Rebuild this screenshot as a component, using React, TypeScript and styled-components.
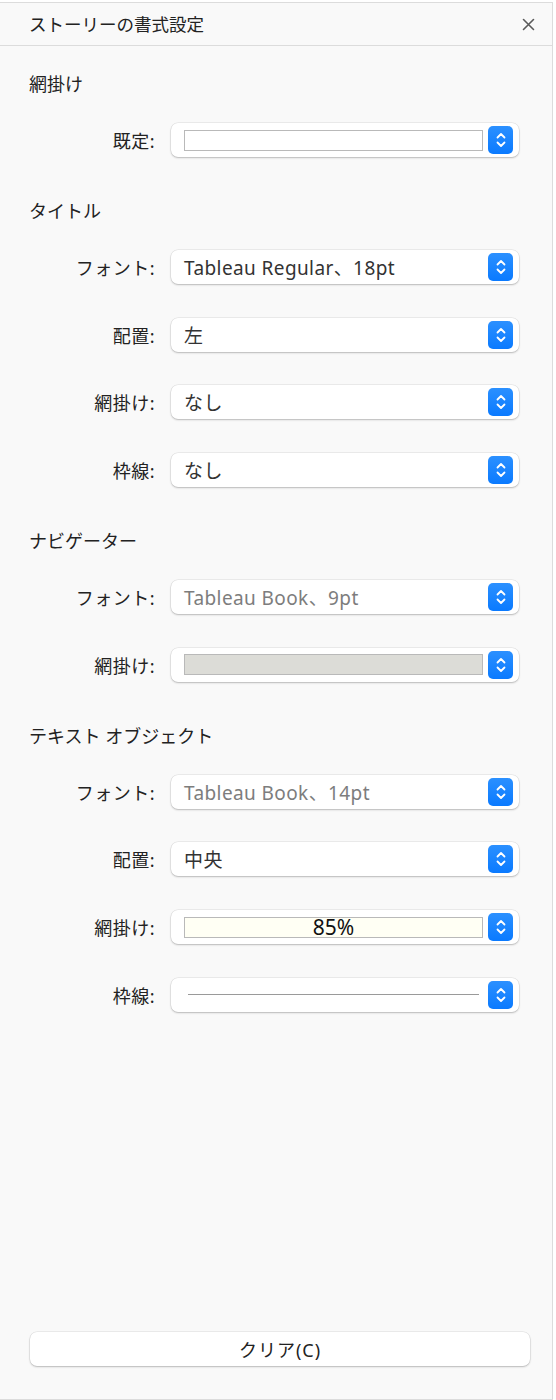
import React from 'react';
import styled, { createGlobalStyle } from 'styled-components';

const GlobalStyle = createGlobalStyle`
  html, body {
    margin: 0;
    padding: 0;
    background: #ffffff;
  }
  body {
    font-family: "Noto Sans", "Noto Sans CJK JP", sans-serif;
    -webkit-font-smoothing: antialiased;
  }
  #root {
    padding-top: 2px;
  }
`;

type RowData = {
  label: string;
  kind: 'text' | 'swatch' | 'line';
  value?: string;
  muted?: boolean;
  swatch?: string;
};

type SectionData = { title: string; rows: RowData[] };

const sections: SectionData[] = [
  {
    title: '網掛け',
    rows: [{ label: '既定:', kind: 'swatch', swatch: '#ffffff' }],
  },
  {
    title: 'タイトル',
    rows: [
      { label: 'フォント:', kind: 'text', value: 'Tableau Regular、18pt' },
      { label: '配置:', kind: 'text', value: '左' },
      { label: '網掛け:', kind: 'text', value: 'なし' },
      { label: '枠線:', kind: 'text', value: 'なし' },
    ],
  },
  {
    title: 'ナビゲーター',
    rows: [
      { label: 'フォント:', kind: 'text', value: 'Tableau Book、9pt', muted: true },
      { label: '網掛け:', kind: 'swatch', swatch: '#dcdcd7' },
    ],
  },
  {
    title: 'テキスト オブジェクト',
    rows: [
      { label: 'フォント:', kind: 'text', value: 'Tableau Book、14pt', muted: true },
      { label: '配置:', kind: 'text', value: '中央' },
      { label: '網掛け:', kind: 'swatch', swatch: '#fffff4', value: '85%' },
      { label: '枠線:', kind: 'line' },
    ],
  },
];

export default function App() {
  return (
    <>
      <GlobalStyle />
      <Panel>
        <Header>
          <Title>ストーリーの書式設定</Title>
          <CloseButton aria-label="閉じる">
            <svg width="13" height="13" viewBox="0 0 13 13">
              <path d="M1.5 1.5 L11.5 11.5 M11.5 1.5 L1.5 11.5" stroke="#5a5a5a" strokeWidth="1.6" strokeLinecap="round" />
            </svg>
          </CloseButton>
        </Header>
        <Body>
          {sections.map((s) => (
            <Section key={s.title}>
              <SectionTitle>{s.title}</SectionTitle>
              <Rows>
                {s.rows.map((r, i) => (
                  <Row key={i}>
                    <Label>{r.label}</Label>
                    <Select>
                      <Value>
                        {r.kind === 'text' && <ValueText $muted={r.muted}>{r.value}</ValueText>}
                        {r.kind === 'swatch' && <Swatch $bg={r.swatch || '#fff'}>{r.value}</Swatch>}
                        {r.kind === 'line' && <BorderLine />}
                      </Value>
                      <Stepper>
                        <svg width="12" height="18" viewBox="0 0 12 18">
                          <path d="M2.5 6.5 L6 3 L9.5 6.5 M2.5 11.5 L6 15 L9.5 11.5" stroke="#ffffff" strokeWidth="1.8" fill="none" strokeLinecap="round" strokeLinejoin="round" />
                        </svg>
                      </Stepper>
                    </Select>
                  </Row>
                ))}
              </Rows>
            </Section>
          ))}
        </Body>
        <Footer>
          <ClearButton>クリア(C)</ClearButton>
        </Footer>
      </Panel>
    </>
  );
}

const Panel = styled.div`
  width: 552px;
  height: 1396px;
  display: flex;
  flex-direction: column;
  background: #f9f9f9;
  border-top: 1px solid #dcdcdc;
  border-right: 1px solid #dcdcdc;
  border-bottom: 1px solid #dcdcdc;
`;

const Header = styled.div`
  height: 42px;
  display: flex;
  align-items: center;
  justify-content: space-between;
  padding: 0 12px 0 29px;
  border-bottom: 1px solid #dcdcdc;
`;

const Title = styled.div`
  font-size: 17.5px;
  color: #222;
  line-height: 22px;
`;

const CloseButton = styled.div`
  width: 24px;
  height: 24px;
  display: flex;
  align-items: center;
  justify-content: center;
`;

const Body = styled.div`
  flex: 1;
  display: flex;
  flex-direction: column;
  gap: 43px;
  padding-top: 27px;
`;

const Section = styled.div`
  display: flex;
  flex-direction: column;
  gap: 28px;
`;

const SectionTitle = styled.div`
  padding-left: 29px;
  font-size: 18px;
  line-height: 22px;
  color: #222;
`;

const Rows = styled.div`
  display: flex;
  flex-direction: column;
  gap: 33.7px;
`;

const Row = styled.div`
  display: grid;
  grid-template-columns: 155px 348px;
  column-gap: 16px;
  align-items: center;
`;

const Label = styled.div`
  text-align: right;
  font-size: 18px;
  letter-spacing: 0.5px;
  color: #222;
`;

const Select = styled.div`
  height: 34px;
  box-sizing: border-box;
  background: #ffffff;
  border-radius: 7px;
  box-shadow: 0 0 0 0.5px rgba(0, 0, 0, 0.1), 0 1px 2px rgba(0, 0, 0, 0.22);
  display: flex;
  align-items: center;
  padding: 0 6px 0 13px;
  gap: 5px;
`;

const Value = styled.div`
  flex: 1;
  min-width: 0;
  display: flex;
  align-items: center;
`;

const ValueText = styled.span<{ $muted?: boolean }>`
  font-size: 19px;
  letter-spacing: 0.4px;
  color: ${(p) => (p.$muted ? '#7d7d7d' : '#333')};
  white-space: nowrap;
`;

const Swatch = styled.div<{ $bg: string }>`
  flex: 1;
  height: 21px;
  box-sizing: border-box;
  background: ${(p) => p.$bg};
  border: 1px solid #b9b9b9;
  display: flex;
  align-items: center;
  justify-content: center;
  font-size: 21px;
  color: #111;
`;

const BorderLine = styled.div`
  flex: 1;
  height: 1px;
  margin: 0 4px;
  background: #9a9a9a;
`;

const Stepper = styled.div`
  width: 25px;
  height: 28px;
  border-radius: 5px;
  background: linear-gradient(#2b90ff, #0a7aff);
  display: flex;
  align-items: center;
  justify-content: center;
  flex-shrink: 0;
`;

const Footer = styled.div`
  padding: 0 22px 33px 30px;
`;

const ClearButton = styled.div`
  height: 34px;
  background: #ffffff;
  border-radius: 7px;
  box-shadow: 0 0 0 0.5px rgba(0, 0, 0, 0.1), 0 1px 2px rgba(0, 0, 0, 0.22);
  display: flex;
  align-items: center;
  justify-content: center;
  font-size: 18px;
  letter-spacing: 1px;
  color: #222;
`;
